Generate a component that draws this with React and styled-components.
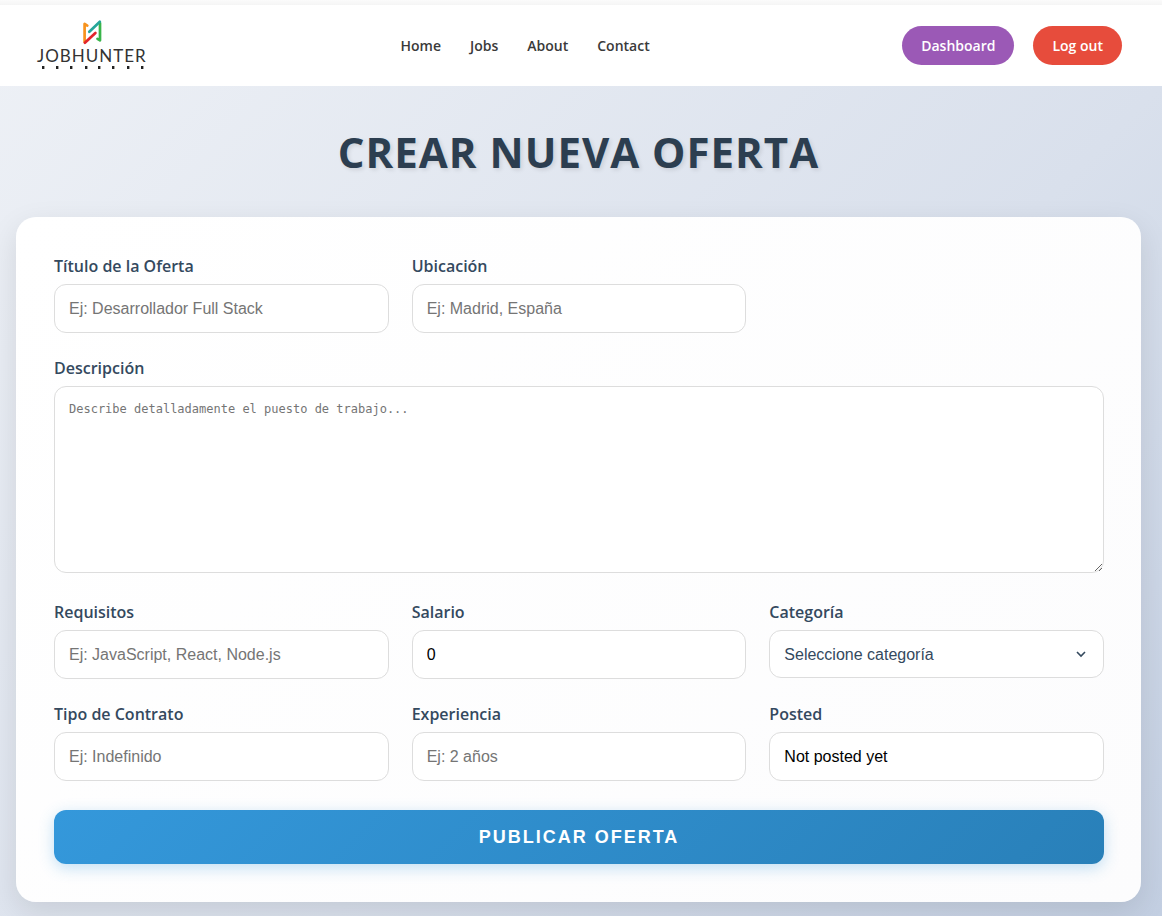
import React from "react";
import styled, { createGlobalStyle } from "styled-components";

const uiFont = `"Segoe UI", "Open Sans", "Noto Sans", sans-serif`;
const inputFont = `"Liberation Sans", Arial, sans-serif`;

const GlobalStyle = createGlobalStyle`
  *, *::before, *::after { box-sizing: border-box; }
  body { margin: 0; font-family: ${uiFont}; }
`;

const Page = styled.div`
  display: flex;
  flex-direction: column;
  min-height: 100vh;
  background: linear-gradient(135deg, #eef1f6 0%, #d9e0ec 60%, #c3cfe2 100%);
`;

const Header = styled.header`
  display: flex;
  justify-content: space-between;
  align-items: center;
  height: 86px;
  padding: 5px 40px 0 36px;
  background: linear-gradient(#fbfbfb, #f5f5f5) top / 100% 5px no-repeat #ffffff;
`;

const LogoLink = styled.a`
  display: block;
  width: 112px;
  height: 56px;
`;

const Nav = styled.nav`
  display: flex;
  gap: 29px;
`;

const NavLink = styled.a`
  color: #3a3a3a;
  font-size: 14px;
  font-weight: 600;
  line-height: 20px;
  text-decoration: none;
`;

const Actions = styled.div`
  display: flex;
  justify-content: flex-end;
  gap: 19px;
`;

const PillButton = styled.button`
  height: 39px;
  padding: 0 19px;
  border: 0;
  border-radius: 20px;
  background: ${(p) => p.$color};
  color: #ffffff;
  font-family: ${uiFont};
  font-size: 14px;
  font-weight: 600;
  cursor: pointer;
`;

const Main = styled.main`
  flex: 1;
  padding: 37px 21px 14px 16px;
`;

const Title = styled.h1`
  margin: 0 0 36px;
  color: #2c3e50;
  font-size: 42px;
  font-weight: 700;
  line-height: 58px;
  letter-spacing: 1px;
  text-align: center;
  text-transform: uppercase;
  text-shadow: 2px 2px 4px rgba(0, 0, 0, 0.1);
`;

const OfferForm = styled.form`
  display: grid;
  grid-template-columns: repeat(3, minmax(0, 1fr));
  column-gap: 23px;
  row-gap: 24px;
  padding: 38px 37px 38px 38px;
  border-radius: 20px;
  background: linear-gradient(135deg, #ffffff, #fcfcfd);
  box-shadow: 0 10px 30px rgba(0, 0, 0, 0.1);
`;

const Field = styled.div`
  display: flex;
  flex-direction: column;
  gap: 7px;
  grid-column: ${(p) => (p.$wide ? "1 / -1" : "auto")};
  padding-bottom: ${(p) => (p.$wide ? "4px" : "0")};
`;

const Label = styled.label`
  color: #34495e;
  font-size: 16px;
  font-weight: 600;
  line-height: 22px;
`;

const Input = styled.input`
  width: 100%;
  height: 49px;
  padding: 0 14px;
  border: 1px solid #dddddd;
  border-radius: 12px;
  background: #ffffff;
  color: #000000;
  font-family: ${inputFont};
  font-size: 16px;
  &::placeholder { color: #757575; }
`;

const TextArea = styled.textarea`
  display: block;
  width: 100%;
  height: 187px;
  padding: 14px;
  border: 1px solid #dddddd;
  border-radius: 12px;
  background: #ffffff;
  font-family: "DejaVu Sans Mono", monospace;
  font-size: 12px;
  line-height: 16px;
  resize: vertical;
  &::placeholder { color: #757575; }
`;

const SelectWrap = styled.div`
  position: relative;
`;

const Select = styled.select`
  appearance: none;
  display: block;
  width: 100%;
  height: 48px;
  padding: 0 40px 0 14px;
  border: 1px solid #dddddd;
  border-radius: 12px;
  background: #ffffff;
  color: #34495e;
  font-family: ${inputFont};
  font-size: 16px;
`;

const Chevron = styled.svg`
  position: absolute;
  top: 19px;
  right: 18px;
  width: 10px;
  height: 10px;
  pointer-events: none;
`;

const Submit = styled.button`
  grid-column: 1 / -1;
  height: 54px;
  margin-top: 5px;
  border: 0;
  border-radius: 12px;
  background: linear-gradient(135deg, #3498db, #2980b9);
  box-shadow: 0 4px 15px rgba(52, 152, 219, 0.3);
  color: #ffffff;
  font-family: ${inputFont};
  font-size: 18px;
  font-weight: 700;
  letter-spacing: 2px;
  text-transform: uppercase;
  cursor: pointer;
`;

const Wordmark = styled.text`
  font-family: Lato, sans-serif;
  font-size: 17px;
  font-weight: 400;
  letter-spacing: 1px;
  fill: #333333;
`;

function Logo() {
  return (
    <svg width="112" height="56" viewBox="0 0 112 56" role="img" aria-label="Jobhunter">
      <g fill="none" strokeWidth="2.7" strokeLinecap="round" strokeLinejoin="round">
        <path d="M51.3 7.6 48.6 6V24" stroke="#f7931e" />
        <path d="M61.5 20.8 64 22.3V5" stroke="#39b54a" />
        <path d="M53.3 13.7 63.8 3.8" stroke="#26a69a" />
        <path d="M48.9 24.7 59.4 14.9" stroke="#e3242b" />
      </g>
      <Wordmark x="1" y="44">JOBHUNTER</Wordmark>
      <g fill="#222222">
        {[6, 20, 34, 49, 62, 76, 91, 105].map((x) => (
          <rect key={x} x={x} y="48" width="2.4" height="3" />
        ))}
      </g>
    </svg>
  );
}

function TextField({ id, label, ...rest }) {
  return (
    <Field>
      <Label htmlFor={id}>{label}</Label>
      <Input id={id} {...rest} />
    </Field>
  );
}

export default function App() {
  return (
    <Page>
      <GlobalStyle />
      <Header>
        <LogoLink href="#home"><Logo /></LogoLink>
        <Nav>
          <NavLink href="#home">Home</NavLink>
          <NavLink href="#jobs">Jobs</NavLink>
          <NavLink href="#about">About</NavLink>
          <NavLink href="#contact">Contact</NavLink>
        </Nav>
        <Actions>
          <PillButton type="button" $color="#9b59b6">Dashboard</PillButton>
          <PillButton type="button" $color="#e74c3c">Log out</PillButton>
        </Actions>
      </Header>
      <Main>
        <Title>Crear nueva oferta</Title>
        <OfferForm onSubmit={(e) => e.preventDefault()}>
          <TextField id="titulo" label="Título de la Oferta" placeholder="Ej: Desarrollador Full Stack" />
          <TextField id="ubicacion" label="Ubicación" placeholder="Ej: Madrid, España" />
          <Field $wide>
            <Label htmlFor="descripcion">Descripción</Label>
            <TextArea id="descripcion" placeholder="Describe detalladamente el puesto de trabajo..." />
          </Field>
          <TextField id="requisitos" label="Requisitos" placeholder="Ej: JavaScript, React, Node.js" />
          <TextField id="salario" label="Salario" inputMode="numeric" defaultValue="0" />
          <Field>
            <Label htmlFor="categoria">Categoría</Label>
            <SelectWrap>
              <Select id="categoria" defaultValue="">
                <option value="">Seleccione categoría</option>
              </Select>
              <Chevron viewBox="0 0 10 10" fill="none" stroke="#34495e" strokeWidth="1.6" aria-hidden="true">
                <path d="M1 3l4 4 4-4" />
              </Chevron>
            </SelectWrap>
          </Field>
          <TextField id="contrato" label="Tipo de Contrato" placeholder="Ej: Indefinido" />
          <TextField id="experiencia" label="Experiencia" placeholder="Ej: 2 años" />
          <TextField id="posted" label="Posted" defaultValue="Not posted yet" readOnly />
          <Submit type="submit">Publicar oferta</Submit>
        </OfferForm>
      </Main>
    </Page>
  );
}
